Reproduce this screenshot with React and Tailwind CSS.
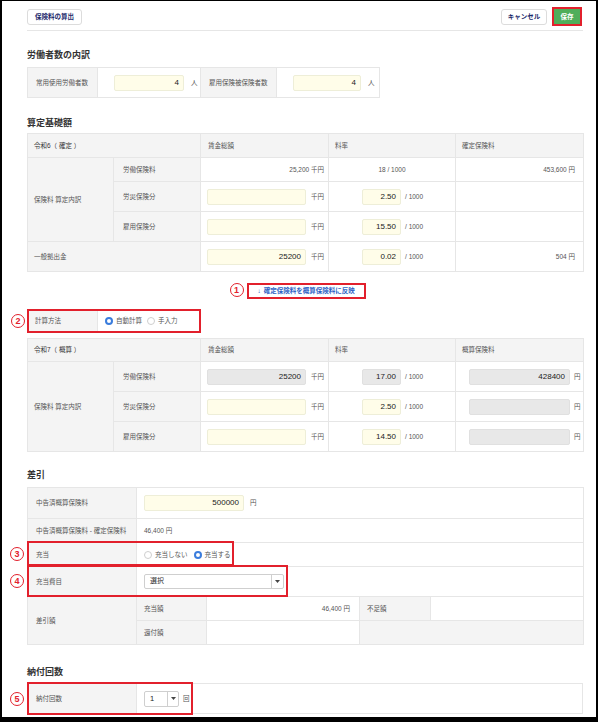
import React from 'react';

// annotation red
const redBox = 'border-2 border-[#e2202c]';

const Circle = ({ n, className }) => (
  <div
    className={`absolute flex items-center justify-center w-[14px] h-[14px] rounded-full border-[1.5px] border-[#e2202c] bg-white text-[#e2202c] text-[9px] font-bold leading-none ${className}`}
  >
    {n}
  </div>
);

const Heading = ({ children, className = '' }) => (
  <h2 className={`text-[9px] leading-[12px] font-bold text-[#333] ${className}`}>{children}</h2>
);

const Field = ({ value, w, gray }) => (
  <div
    className={`h-[16px] flex items-center justify-end pr-[4px] rounded-[2px] border text-[8px] text-[#222] ${
      gray ? 'bg-[#e8e8e8] border-[#e0e0e0]' : 'bg-[#fffde9] border-[#eeeed8]'
    }`}
    style={{ width: w }}
  >
    {value}
  </div>
);

const Radio = ({ checked, label }) => (
  <span className="flex items-center gap-[3px]">
    <span
      className={
        checked
          ? 'w-[8px] h-[8px] rounded-full border-[2.5px] border-[#3b7ddd] bg-white'
          : 'w-[8px] h-[8px] rounded-full border border-[#cfcfcf] bg-white'
      }
    />
    <span>{label}</span>
  </span>
);

const Caret = () => (
  <svg width="5" height="3" viewBox="0 0 5 3">
    <path d="M0 0 L5 0 L2.5 3 Z" fill="#444" />
  </svg>
);

const th = 'border border-[#e6e6e6] bg-[#f4f4f4] text-left font-normal';
const td = 'border border-[#e6e6e6]';

const YenField = ({ value, gray }) => (
  <div className="flex items-center justify-end gap-[5px] pr-[4px]">
    <Field value={value} w={99} gray={gray} />
    <span>千円</span>
  </div>
);

const RateField = ({ value, gray }) => (
  <div className="flex items-center gap-[4px] pl-[33px]">
    <Field value={value} w={39} gray={gray} />
    <span>/ 1000</span>
  </div>
);

const ResultField = ({ value }) => (
  <div className="flex items-center gap-[4px] pl-[13px]">
    <Field value={value} w={101} gray />
    <span>円</span>
  </div>
);

const Cols = () => (
  <colgroup>
    <col className="w-[86px]" />
    <col className="w-[87px]" />
    <col className="w-[128px]" />
    <col className="w-[127px]" />
    <col className="w-[128px]" />
  </colgroup>
);

export default function App() {
  return (
    <div className="w-[598px] h-[722px] overflow-hidden bg-white border-l-[2px] border-t border-r-2 border-b-[5px] border-black font-['Liberation_Sans','Noto_Sans_CJK_JP',sans-serif] text-[6.5px] text-[#555]">
      <div className="pl-[25px] w-[581px] pt-[7px]">
        {/* top bar */}
        <div className="flex items-center justify-between h-[17px]">
          <button className="h-[16px] w-[55px] rounded-[3px] border border-[#dcdcdc] bg-white text-[6.5px] font-bold text-[#1c2a6b]">
            保険料の算出
          </button>
          <div className="flex items-center gap-[5px] pr-[1px]">
            <button className="h-[16px] w-[46px] rounded-[3px] border border-[#dcdcdc] bg-white text-[6.5px] font-bold text-[#1c2a6b]">
              キャンセル
            </button>
            <div className={`${redBox} p-0`}>
              <button className="h-[15px] w-[26px] bg-[#4fae5a] text-white text-[6.5px] font-bold">保存</button>
            </div>
          </div>
        </div>
        <div className="mt-[5px] h-px bg-[#e6e6e6]" />

        {/* 労働者数の内訳 */}
        <Heading className="mt-[18px]">労働者数の内訳</Heading>
        <div className="mt-[6px] flex h-[31px] w-[353px] border border-[#e6e6e6]">
          <div className="w-[70px] bg-[#f4f4f4] border-r border-[#e6e6e6] flex items-center pl-[8px]">常用使用労働者数</div>
          <div className="w-[103px] border-r border-[#e6e6e6] flex items-center pl-[16px] gap-[7px]">
            <Field value="4" w={70} />
            <span>人</span>
          </div>
          <div className="w-[76px] bg-[#f4f4f4] border-r border-[#e6e6e6] flex items-center pl-[8px]">雇用保険被保険者数</div>
          <div className="flex-1 flex items-center pl-[16px] gap-[7px]">
            <Field value="4" w={68} />
            <span>人</span>
          </div>
        </div>

        {/* 算定基礎額 */}
        <Heading className="mt-[19px]">算定基礎額</Heading>
        <table className="mt-[4px] w-[556px] table-fixed border-collapse">
          <Cols />
          <tbody>
            <tr className="h-[24px]">
              <th colSpan={2} className={`${th} pl-[6px] font-bold text-[#333]`}>令和6（ 確定 ）</th>
              <th className={`${th} pl-[7px]`}>賃金総額</th>
              <th className={`${th} pl-[6px]`}>料率</th>
              <th className={`${th} pl-[6px]`}>確定保険料</th>
            </tr>
            <tr className="h-[24px]">
              <td rowSpan={3} className={`${td} bg-[#f4f4f4] pl-[6px]`}>保険料 算定内訳</td>
              <td className={`${td} bg-[#f4f4f4] pl-[9px]`}>労働保険料</td>
              <td className={`${td} text-right pr-[4px]`}>25,200 千円</td>
              <td className={`${td} text-center`}>18 / 1000</td>
              <td className={`${td} text-right pr-[8px]`}>453,600 円</td>
            </tr>
            <tr className="h-[30px]">
              <td className={`${td} bg-[#f4f4f4] pl-[9px]`}>労災保険分</td>
              <td className={td}><YenField value="" /></td>
              <td className={td}><RateField value="2.50" /></td>
              <td className={td} />
            </tr>
            <tr className="h-[30px]">
              <td className={`${td} bg-[#f4f4f4] pl-[9px]`}>雇用保険分</td>
              <td className={td}><YenField value="" /></td>
              <td className={td}><RateField value="15.50" /></td>
              <td className={td} />
            </tr>
            <tr className="h-[30px]">
              <td colSpan={2} className={`${td} bg-[#f4f4f4] pl-[6px]`}>一般拠出金</td>
              <td className={td}><YenField value="25200" /></td>
              <td className={td}><RateField value="0.02" /></td>
              <td className={`${td} text-right pr-[8px]`}>504 円</td>
            </tr>
          </tbody>
        </table>

        {/* reflect link */}
        <div className="mt-[11px] flex justify-center pl-[2px]">
          <div className="relative">
            <Circle n="1" className="left-[-17px] top-[0px]" />
            <button className={`${redBox} h-[16px] w-[119px] bg-white text-[6.5px] font-bold text-[#2f63c4] flex items-center justify-center gap-[3px]`}>
              <span>↓</span>
              <span>確定保険料を概算保険料に反映</span>
            </button>
          </div>
        </div>

        {/* 計算方法 */}
        <div className="relative mt-[10px] w-[174px]">
          <Circle n="2" className="left-[-16px] top-[5px]" />
          <div className={`${redBox} flex h-[24px]`}>
            <div className="w-[69px] bg-[#f4f4f4] border-r border-[#e6e6e6] flex items-center pl-[6px]">計算方法</div>
            <div className="flex-1 flex items-center pl-[7px] gap-[5px]">
              <Radio checked label="自動計算" />
              <Radio label="手入力" />
            </div>
          </div>
        </div>

        {/* 令和7 */}
        <table className="mt-[5px] w-[556px] table-fixed border-collapse">
          <Cols />
          <tbody>
            <tr className="h-[23px]">
              <th colSpan={2} className={`${th} pl-[6px] font-bold text-[#333]`}>令和7（ 概算 ）</th>
              <th className={`${th} pl-[7px]`}>賃金総額</th>
              <th className={`${th} pl-[6px]`}>料率</th>
              <th className={`${th} pl-[6px]`}>概算保険料</th>
            </tr>
            <tr className="h-[30px]">
              <td rowSpan={3} className={`${td} bg-[#f4f4f4] pl-[6px]`}>保険料 算定内訳</td>
              <td className={`${td} bg-[#f4f4f4] pl-[9px]`}>労働保険料</td>
              <td className={td}><YenField value="25200" gray /></td>
              <td className={td}><RateField value="17.00" gray /></td>
              <td className={td}><ResultField value="428400" /></td>
            </tr>
            <tr className="h-[30px]">
              <td className={`${td} bg-[#f4f4f4] pl-[9px]`}>労災保険分</td>
              <td className={td}><YenField value="" /></td>
              <td className={td}><RateField value="2.50" /></td>
              <td className={td}><ResultField value="" /></td>
            </tr>
            <tr className="h-[30px]">
              <td className={`${td} bg-[#f4f4f4] pl-[9px]`}>雇用保険分</td>
              <td className={td}><YenField value="" /></td>
              <td className={td}><RateField value="14.50" /></td>
              <td className={td}><ResultField value="" /></td>
            </tr>
          </tbody>
        </table>

        {/* 差引 */}
        <Heading className="mt-[17px]">差引</Heading>
        <div className="relative mt-[6px]">
          <table className="w-[556px] table-fixed border-collapse">
            <colgroup>
              <col className="w-[109px]" />
              <col className="w-[70px]" />
              <col className="w-[153px]" />
              <col className="w-[71px]" />
              <col className="w-[153px]" />
            </colgroup>
            <tbody>
              <tr className="h-[31px]">
                <td className={`${td} bg-[#f4f4f4] pl-[8px]`}>中告済概算保険料</td>
                <td colSpan={4} className={td}>
                  <div className="flex items-center gap-[6px] pl-[7px]">
                    <Field value="500000" w={100} />
                    <span>円</span>
                  </div>
                </td>
              </tr>
              <tr className="h-[24px]">
                <td className={`${td} bg-[#f4f4f4] pl-[8px]`}>中告済概算保険料 - 確定保険料</td>
                <td colSpan={4} className={`${td} pl-[7px]`}>46,400 円</td>
              </tr>
              <tr className="h-[24px]">
                <td className={`${td} bg-[#f4f4f4] pl-[8px]`}>充当</td>
                <td colSpan={4} className={td}>
                  <div className="flex items-center gap-[6px] pl-[7px]">
                    <Radio label="充当しない" />
                    <Radio checked label="充当する" />
                  </div>
                </td>
              </tr>
              <tr className="h-[30px]">
                <td className={`${td} bg-[#f4f4f4] pl-[8px]`}>充当費目</td>
                <td colSpan={4} className={td}>
                  <div className="ml-[7px] flex h-[15px] w-[140px] items-center rounded-[2px] border border-[#cfcfcf] bg-white">
                    <span className="flex-1 pl-[5px] text-[7px] text-[#333]">選択</span>
                    <span className="flex h-full w-[12px] items-center justify-center border-l border-[#cfcfcf]">
                      <Caret />
                    </span>
                  </div>
                </td>
              </tr>
              <tr className="h-[24px]">
                <td rowSpan={2} className={`${td} bg-[#f4f4f4] pl-[8px]`}>差引額</td>
                <td className={`${td} bg-[#f4f4f4] pl-[7px]`}>充当額</td>
                <td className={`${td} text-right pr-[9px]`}>46,400 円</td>
                <td className={`${td} bg-[#f4f4f4] pl-[7px]`}>不足額</td>
                <td className={td} />
              </tr>
              <tr className="h-[24px]">
                <td className={`${td} bg-[#f4f4f4] pl-[7px]`}>還付額</td>
                <td className={td} />
                <td colSpan={2} className={`${td} bg-[#f4f4f4]`} />
              </tr>
            </tbody>
          </table>
          {/* annotations */}
          <div className={`absolute left-0 top-[54px] h-[25px] w-[207px] ${redBox}`} />
          <Circle n="3" className="left-[-17px] top-[60px]" />
          <div className={`absolute left-0 top-[78px] h-[32px] w-[261px] ${redBox}`} />
          <Circle n="4" className="left-[-17px] top-[87px]" />
        </div>

        {/* 納付回数 */}
        <Heading className="mt-[21px]">納付回数</Heading>
        <div className="relative mt-[5px]">
          <div className="flex h-[31px] w-[556px] border border-[#e6e6e6]">
            <div className="w-[109px] bg-[#f4f4f4] border-r border-[#e6e6e6] flex items-center pl-[8px]">納付回数</div>
            <div className="flex-1 flex items-center pl-[7px] gap-[4px]">
              <div className="flex h-[16px] w-[35px] items-center rounded-[2px] border border-[#cfcfcf] bg-white">
                <span className="flex-1 pl-[5px] text-[7.5px] text-[#222]">1</span>
                <span className="flex h-full w-[11px] items-center justify-center border-l border-[#cfcfcf]">
                  <Caret />
                </span>
              </div>
              <span>回</span>
            </div>
          </div>
          <div className={`absolute left-0 top-[-1px] h-[33px] w-[166px] ${redBox}`} />
          <Circle n="5" className="left-[-17px] top-[9px]" />
        </div>
      </div>
    </div>
  );
}
